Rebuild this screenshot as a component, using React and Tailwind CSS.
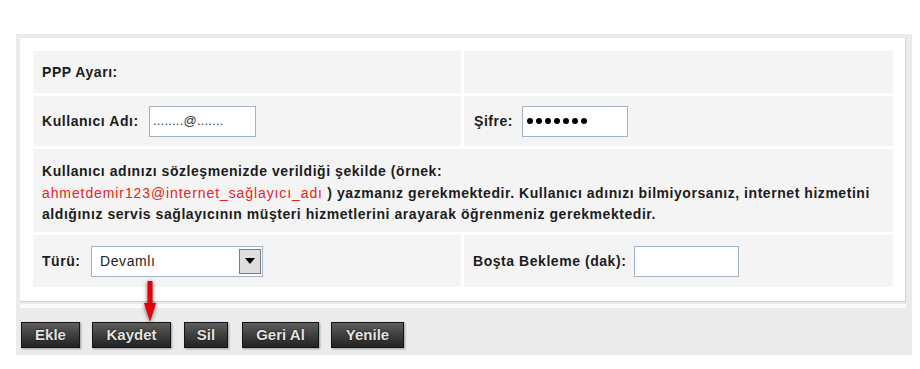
import React from 'react';

const font = { fontFamily: '"Liberation Sans", Arial, sans-serif' };

function Btn({ label, w }) {
  return (
    <div
      className={`${w} h-[26px] flex items-center justify-center border border-[#161616] bg-linear-to-b from-[#5e5e5e] to-[#232323] shadow-[1px_1px_2px_rgba(0,0,0,0.35)] text-[15px] font-bold text-[#e2e2e2] [text-shadow:0_0_2px_rgba(0,0,0,0.9)]`}
    >
      {label}
    </div>
  );
}

export default function App() {
  return (
    <div className="relative w-[920px] h-[369px] overflow-hidden bg-white pt-[34px]" style={font}>
      <div className="ml-[16px] w-[896px] bg-[#ebebeb] pt-[4px] pl-[4px] pr-[6px] pb-[7px]">
        {/* main white panel */}
        <div className="bg-white border-r border-b border-[#d2d2d2] pl-[13px] pr-[12px] pt-[13px] pb-[14px]">
          <div className="grid grid-cols-[428px_429px] gap-[3px] text-[14px] tracking-[0.55px] font-bold text-[#1c1c1c]">
            <div className="h-[42px] bg-[#f4f4f4] flex items-center pl-[9px]">PPP Ayarı:</div>
            <div className="h-[42px] bg-[#f4f4f4]"></div>

            <div className="h-[50px] bg-[#f4f4f4] flex items-center pl-[9px]">
              <span className="w-[107px] whitespace-nowrap">Kullanıcı Adı:</span>
              <div className="w-[107px] h-[31px] border border-[#a3b3c6] bg-white flex items-center pl-[3px] text-[13px] tracking-[0.2px] font-normal text-[#333]">
                ........@.......
              </div>
            </div>
            <div className="h-[50px] bg-[#f4f4f4] flex items-center pl-[10px]">
              <span className="w-[48px]">Şifre:</span>
              <div className="w-[106px] h-[31px] border border-[#a3b3c6] bg-white flex items-center gap-[3px] pl-[4px]">
                {[0, 1, 2, 3, 4, 5, 6].map((i) => (
                  <span key={i} className="w-[6px] h-[6px] rounded-full bg-black"></span>
                ))}
              </div>
            </div>

            <div className="col-span-2 h-[83px] bg-[#f4f4f4] pl-[9px] pt-[12px] leading-[21.5px] whitespace-nowrap">
              Kullanıcı adınızı sözleşmenizde verildiği şekilde (örnek:
              <br />
              <span className="font-normal text-[#e8231b] tracking-[0.9px]">ahmetdemir123@internet_sağlayıcı_adı</span> ) yazmanız
              gerekmektedir. Kullanıcı adınızı bilmiyorsanız, internet hizmetini
              <br />
              aldığınız servis sağlayıcının müşteri hizmetlerini arayarak öğrenmeniz gerekmektedir.
            </div>

            <div className="h-[52px] bg-[#f4f4f4] flex items-center pl-[9px]">
              <span className="w-[49px]">Türü:</span>
              <div className="w-[172px] h-[31px] border border-[#a3b3c6] bg-white flex items-center">
                <span className="flex-1 pl-[8px] text-[14px] tracking-[0.6px] font-normal text-[#222]">Devamlı</span>
                <div className="mr-[1px] w-[22px] h-[25px] border border-[#7c7c7c] bg-[#dedede] flex items-center justify-center">
                  <svg width="10" height="6" viewBox="0 0 10 6">
                    <polygon points="0,0 10,0 5,6" fill="#000" />
                  </svg>
                </div>
              </div>
            </div>
            <div className="h-[52px] bg-[#f4f4f4] flex items-center pl-[9px]">
              <span className="w-[161px] whitespace-nowrap">Boşta Bekleme (dak):</span>
              <div className="w-[105px] h-[31px] border border-[#a3b3c6] bg-white"></div>
            </div>
          </div>
        </div>

        <div className="mt-[2px] h-[4px] bg-[#fafafa]"></div>

        <div className="mt-[14px] pl-[1px] flex gap-[12px]">
          <Btn label="Ekle" w="w-[59px]" />
          <Btn label="Kaydet" w="w-[79px]" />
          <div className="ml-[1px]">
            <Btn label="Sil" w="w-[44px]" />
          </div>
          <div className="ml-[2px]">
            <Btn label="Geri Al" w="w-[77px]" />
          </div>
          <Btn label="Yenile" w="w-[73px]" />
        </div>
      </div>

      {/* red pointer arrow */}
      <svg
        className="absolute left-[143px] top-[281px] drop-shadow-[0_1px_2px_rgba(0,0,0,0.6)]"
        width="14"
        height="42"
        viewBox="0 0 14 42"
      >
        <rect x="4.5" y="0" width="5" height="23" fill="#e3000b" />
        <polygon points="1,22 13,22 7,41" fill="#e3000b" />
      </svg>
    </div>
  );
}
